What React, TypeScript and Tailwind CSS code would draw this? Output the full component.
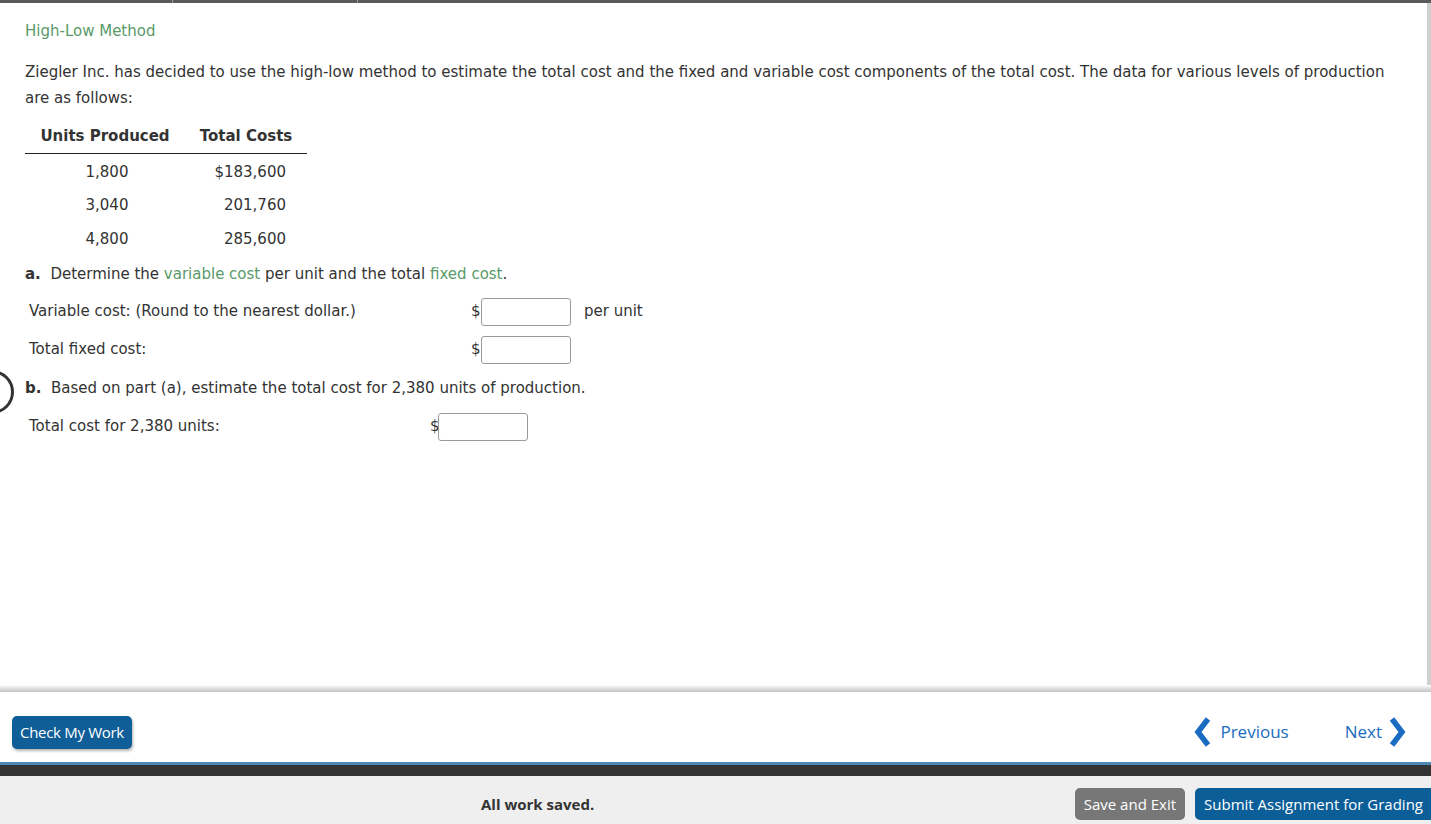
import React from "react";

const green = "text-[#5a9a6a]";

function Chevron({ dir }: { dir: "left" | "right" }) {
  return (
    <svg width="18" height="32" viewBox="0 0 18 32" className="shrink-0">
      {dir === "left" ? (
        <polyline points="14,3 4,16 14,29" fill="none" stroke="#1a6cc0" strokeWidth="5.5" strokeLinejoin="miter" />
      ) : (
        <polyline points="4,3 14,16 4,29" fill="none" stroke="#1a6cc0" strokeWidth="5.5" strokeLinejoin="miter" />
      )}
    </svg>
  );
}

function Box() {
  return <div className="w-[90px] h-[28px] border border-[#9a9a9a] rounded-[3px] bg-white" />;
}

export default function App() {
  const rows = [
    ["1,800", "$183,600"],
    ["3,040", "201,760"],
    ["4,800", "285,600"],
  ];
  return (
    <div className="w-[1431px] h-[824px] overflow-hidden bg-white flex flex-col relative font-['DejaVu_Sans',sans-serif] text-[#333]">
      <div className="h-[3px] bg-[#5a5a5a] shrink-0 flex">
        <div className="w-[172px]" />
        <div className="w-[1px] bg-[#9a9a9a]" />
        <div className="w-[184px]" />
        <div className="w-[1px] bg-[#9a9a9a]" />
      </div>
      <div className="flex h-[682px] shrink-0">
        <div className="flex-1 relative">
          <div className="pl-[25px] pr-[20px] pt-[17px] text-[15px]">
            <div className={`${green} leading-[22px]`}>High-Low Method</div>
            <p className="mt-[17px] leading-[26px]">
              Ziegler Inc. has decided to use the high-low method to estimate the total cost and the fixed and variable cost components of the total cost. The data for various levels of production are as follows:
            </p>
            <div className="mt-[15px] w-[282px]">
              <div className="flex font-bold border-b border-[#222] h-[28px] items-start">
                <div className="w-[160px] text-center leading-[20px]">Units Produced</div>
                <div className="w-[122px] text-center leading-[20px]">Total Costs</div>
              </div>
              <div className="pt-[1px]">
                {rows.map(([a, b]) => (
                  <div key={a} className="flex h-[33.5px] items-center">
                    <div className="w-[160px] flex justify-center"><span className="pl-[4px]">{a}</span></div>
                    <div className="w-[122px] text-right pr-[21px]">{b}</div>
                  </div>
                ))}
              </div>
            </div>
            <div className="mt-[7px] leading-[22px]">
              <span className="font-bold">a.</span>{" "}
              &nbsp;Determine the <span className={green}>variable cost</span> per unit and the total{" "}
              <span className={green}>fixed cost</span>.
            </div>
            <div className="pl-[4px]">
              <div className="flex items-center h-[28px] mt-[13px]">
                <div className="w-[442px]">Variable cost: (Round to the nearest dollar.)</div>
                <span className="w-[10px]">$</span>
                <Box />
                <span className="ml-[13px]">per unit</span>
              </div>
              <div className="flex items-center h-[28px] mt-[10px]">
                <div className="w-[442px]">Total fixed cost:</div>
                <span className="w-[10px]">$</span>
                <Box />
              </div>
            </div>
            <div className="mt-[13px] leading-[22px]">
              <span className="font-bold">b.</span>{" "}
              &nbsp;Based on part (a), estimate the total cost for 2,380 units of production.
            </div>
            <div className="pl-[4px]">
              <div className="flex items-center h-[28px] mt-[14px]">
                <div className="w-[401px]">Total cost for 2,380 units:</div>
                <span className="w-[8px]">$</span>
                <Box />
              </div>
            </div>
          </div>
          <div className="absolute left-[-30px] top-[367px] w-[44px] h-[44px] rounded-full border-[3px] border-[#333]" />
        </div>
        <div className="w-[4px] bg-[#d0d0d0]" />
      </div>
      <div className="h-[7px] shrink-0 bg-gradient-to-b from-[#ffffff] via-[#e0e0e0] to-[#c4c4c4]" />
      <div className="h-[70px] shrink-0 bg-white flex items-center justify-between pl-[12px] pr-[25px] pt-[10px] font-['Open_Sans',sans-serif]">
        <button className="h-[33px] px-[8px] rounded-[5px] bg-[#0f5e98] text-white text-[15px] shadow-[1px_2px_3px_rgba(0,0,0,0.3)] tracking-[-0.3px]">
          Check My Work
        </button>
        <div className="flex items-center text-[#1a6cc0] text-[17px]">
          <Chevron dir="left" />
          <span className="ml-[8px]">Previous</span>
          <span className="ml-[56px]">Next</span>
          <span className="ml-[6px]"><Chevron dir="right" /></span>
        </div>
      </div>
      <div className="h-[3px] shrink-0 bg-[#4a88b8]" />
      <div className="h-[11px] shrink-0 bg-[#333]" />
      <div className="h-[48px] shrink-0 bg-[#efefef] flex items-center font-['Open_Sans',sans-serif] relative">
        <div className="ml-[481px] font-bold text-[15px] text-[#333] mt-[8px]">All work saved.</div>
        <div className="ml-auto flex items-center mt-[8px]">
          <button className="h-[32px] px-[9px] rounded-[5px] bg-[#777] text-white text-[15px]">Save and Exit</button>
          <button className="ml-[10px] h-[32px] pl-[9px] pr-[8px] rounded-l-[5px] bg-[#0b5e98] text-white text-[15px] whitespace-nowrap">
            Submit Assignment for Grading
          </button>
        </div>
      </div>
    </div>
  );
}
